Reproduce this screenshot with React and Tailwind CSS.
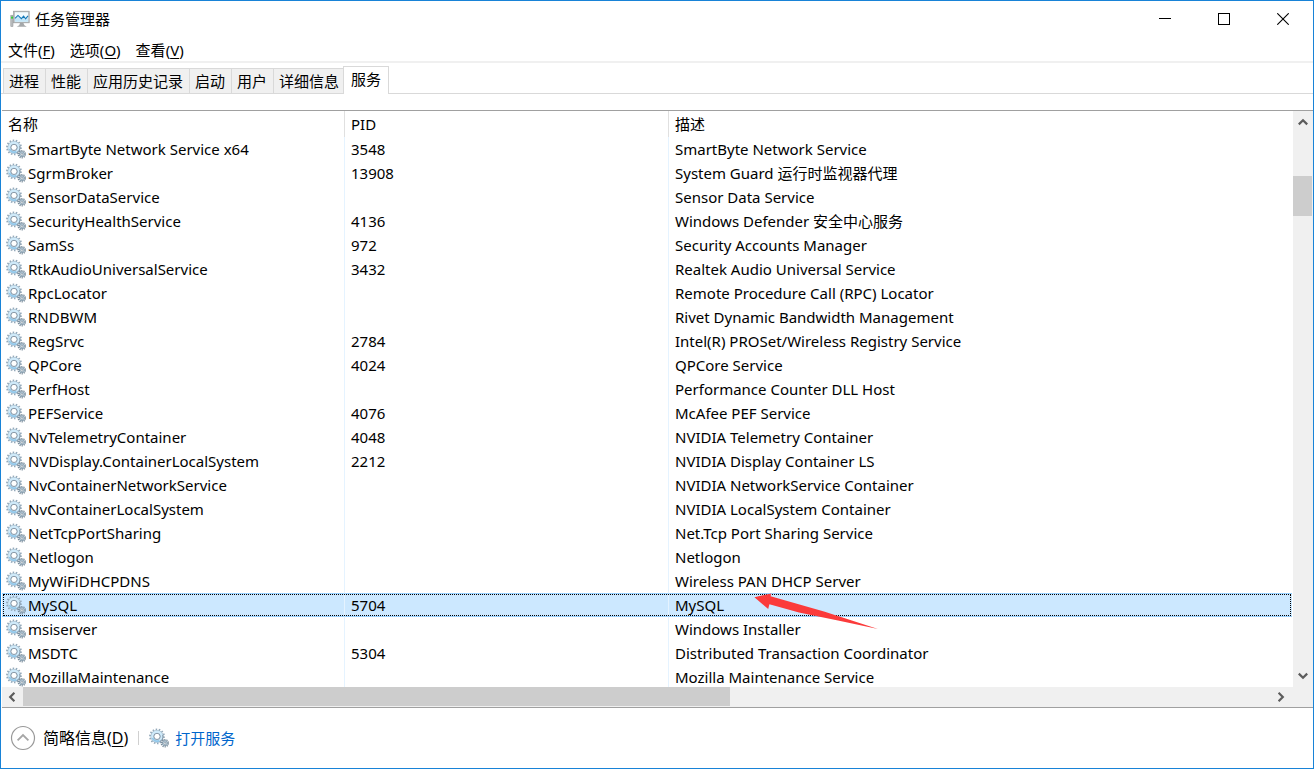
const menus = [
  { label: "文件", hotkey: "F" },
  { label: "选项", hotkey: "O" },
  { label: "查看", hotkey: "V" },
];

const tabs = ["进程", "性能", "应用历史记录", "启动", "用户", "详细信息", "服务"];
const activeTab = "服务";

const services = [
  { name: "SmartByte Network Service x64", pid: "3548", desc: "SmartByte Network Service" },
  { name: "SgrmBroker", pid: "13908", desc: "System Guard 运行时监视器代理" },
  { name: "SensorDataService", pid: "", desc: "Sensor Data Service" },
  { name: "SecurityHealthService", pid: "4136", desc: "Windows Defender 安全中心服务" },
  { name: "SamSs", pid: "972", desc: "Security Accounts Manager" },
  { name: "RtkAudioUniversalService", pid: "3432", desc: "Realtek Audio Universal Service" },
  { name: "RpcLocator", pid: "", desc: "Remote Procedure Call (RPC) Locator" },
  { name: "RNDBWM", pid: "", desc: "Rivet Dynamic Bandwidth Management" },
  { name: "RegSrvc", pid: "2784", desc: "Intel(R) PROSet/Wireless Registry Service" },
  { name: "QPCore", pid: "4024", desc: "QPCore Service" },
  { name: "PerfHost", pid: "", desc: "Performance Counter DLL Host" },
  { name: "PEFService", pid: "4076", desc: "McAfee PEF Service" },
  { name: "NvTelemetryContainer", pid: "4048", desc: "NVIDIA Telemetry Container" },
  { name: "NVDisplay.ContainerLocalSystem", pid: "2212", desc: "NVIDIA Display Container LS" },
  { name: "NvContainerNetworkService", pid: "", desc: "NVIDIA NetworkService Container" },
  { name: "NvContainerLocalSystem", pid: "", desc: "NVIDIA LocalSystem Container" },
  { name: "NetTcpPortSharing", pid: "", desc: "Net.Tcp Port Sharing Service" },
  { name: "Netlogon", pid: "", desc: "Netlogon" },
  { name: "MyWiFiDHCPDNS", pid: "", desc: "Wireless PAN DHCP Server" },
  { name: "MySQL", pid: "5704", desc: "MySQL", selected: true },
  { name: "msiserver", pid: "", desc: "Windows Installer" },
  { name: "MSDTC", pid: "5304", desc: "Distributed Transaction Coordinator" },
  { name: "MozillaMaintenance", pid: "", desc: "Mozilla Maintenance Service" },
];

const GearIcon = () => (
  <svg className="w-5 h-5 shrink-0" viewBox="0 0 20 20" fill="none" aria-hidden="true">
    {/* big gear */}
    <circle cx="8" cy="8.4" r="6.9" stroke="#94a9ba" strokeWidth="2" strokeDasharray="1.5 1.597" />
    <circle cx="8" cy="8.4" r="4.7" stroke="#a3bacb" strokeWidth="3.4" />
    <circle cx="8" cy="8.4" r="4.7" stroke="#cfeafa" strokeWidth="2.4" />
    <path d="M3.5 10A4.8 4.8 0 0 0 10.4 12.6" stroke="#93c8ea" strokeWidth="1.8" />
    <path d="M10.6 13.6A5.8 5.8 0 0 0 13.8 7" stroke="#76899a" strokeWidth="0.9" />
    <circle cx="8" cy="8.4" r="3.1" fill="#fff" stroke="#7d8f9f" strokeWidth="0.9" />
    {/* small gear */}
    <circle cx="15.9" cy="15.2" r="3.6" stroke="#7b8d9b" strokeWidth="1.3" strokeDasharray="1.26 1.002" />
    <circle cx="15.9" cy="15.2" r="2.6" fill="#cfe4f0" stroke="#8197a8" strokeWidth="1" />
    <circle cx="15.9" cy="15.2" r="1.2" fill="#fff" stroke="#64798a" strokeWidth="0.7" />
  </svg>
);

const AppIcon = () => (
  <svg className="w-5 h-[18px] shrink-0" viewBox="0 0 20 18" aria-hidden="true">
    <rect x="0.8" y="5.2" width="2.2" height="11.4" fill="#b9bcbe" stroke="#8d9092" strokeWidth="0.5" />
    <rect x="1.1" y="6.6" width="2" height="2" fill="#2fd02f" />
    <path d="M10 13h3.4l1 2.2 2.4 1.6H6.8l2.4-1.6z" fill="#a5a8aa" />
    <rect x="3.6" y="1.2" width="15.6" height="11.6" fill="#b4b7b9" stroke="#9a9d9f" strokeWidth="0.7" />
    <rect x="4.8" y="2.2" width="13.4" height="9.6" fill="#f1fafe" />
    <path d="M4.8 9l3-2.4 3 2 2.4-1 2.4 2.6 2.6-3.2v4.8H4.8z" fill="#c3e6f8" />
    <path d="M5 8.4l3-3 3.4 3.2 2.2-2.4 2 2.6 2.4-3" fill="none" stroke="#1378b8" strokeWidth="1.1" />
  </svg>
);

const Chevron = ({ className }) => (
  <svg className={className} width="10" height="8" viewBox="0 0 10 8" fill="none" aria-hidden="true">
    <path d="M0.8 6.4L5 2.2l4.2 4.2" stroke="#5c5c5c" strokeWidth="2.2" />
  </svg>
);

const TitleBar = () => (
  <header className="flex items-center h-[35px] pl-[9px] pr-px">
    <AppIcon />
    <h1 className="ml-[5px] flex-1">任务管理器</h1>
    <button aria-label="最小化" className="w-[59px] h-full flex items-center justify-center">
      <svg width="12" height="12" viewBox="0 0 12 12" shapeRendering="crispEdges">
        <path d="M0 5.5h12" stroke="#000" />
      </svg>
    </button>
    <button aria-label="最大化" className="w-[59px] h-full flex items-center justify-center">
      <svg width="12" height="12" viewBox="0 0 12 12" shapeRendering="crispEdges">
        <rect x="0.5" y="0.5" width="11" height="11" fill="none" stroke="#000" />
      </svg>
    </button>
    <button aria-label="关闭" className="w-[59px] h-full flex items-center justify-center">
      <svg width="12" height="12" viewBox="0 0 12 12">
        <path d="M0.3 0.3l11.4 11.4M11.7 0.3L0.3 11.7" stroke="#000" strokeWidth="1.1" />
      </svg>
    </button>
  </header>
);

const MenuBar = () => (
  <nav className="flex items-center gap-[15px] h-[27px] pt-0.5 pl-[7px] border-b-2 border-[#f0f0f0]">
    {menus.map((menu) => (
      <button key={menu.hotkey}>
        {menu.label}(<span className="underline underline-offset-2">{menu.hotkey}</span>)
      </button>
    ))}
  </nav>
);

const TabStrip = () => (
  <div role="tablist" className="flex items-end h-[31px] pl-0.5 border-b border-[#d9d9d9]">
    {tabs.map((tab) =>
      tab === activeTab ? (
        <button
          key={tab}
          role="tab"
          aria-selected="true"
          className="h-7 -mb-px -ml-0.5 px-[7px] pb-1 bg-white border border-b-0 border-[#d9d9d9]"
        >
          {tab}
        </button>
      ) : (
        <button
          key={tab}
          role="tab"
          aria-selected="false"
          className="h-[25px] pl-[5px] pr-1.5 bg-[#f0f0f0] border-t border-l border-[#d9d9d9]"
        >
          {tab}
        </button>
      )
    )}
  </div>
);

const Arrow = () => (
  <svg
    className="absolute left-[85px] -top-px z-10 pointer-events-none"
    width="126"
    height="38"
    viewBox="0 0 126 38"
    aria-hidden="true"
  >
    <path d="M0.4 4.3L17.4 0.4L16.6 3.2L70 18.5L124 36L84 27.6L45 19.5L15.4 11.2L14.2 16z" fill="#fb3b3b" />
  </svg>
);

const ServiceRow = ({ service }) => {
  const cell = service.selected
    ? "h-6 p-0 border-y border-y-[#99d1ff]"
    : "h-6 p-0";

  return (
    <tr
      aria-selected={service.selected ? "true" : "false"}
      className={service.selected ? "bg-[#cce8ff] outline-1 outline-dotted outline-black -outline-offset-2" : ""}
    >
      <td className={`${cell} border-r border-r-[#e5f3ff]`}>
        <div className="flex items-center gap-0.5 pl-1 h-[22px]">
          <GearIcon />
          <span>{service.name}</span>
        </div>
      </td>
      <td className={`${cell} border-r border-r-[#e5f3ff]`}>
        <div className="pl-1.5">{service.pid}</div>
      </td>
      <td className={cell}>
        <div className="relative pl-1.5">
          {service.desc}
          {service.selected && <Arrow />}
        </div>
      </td>
    </tr>
  );
};

const ServiceTable = () => (
  <table className="w-full table-fixed border-separate border-spacing-0 leading-[22px] whitespace-nowrap">
    <colgroup>
      <col className="w-[343px]" />
      <col className="w-[324px]" />
      <col />
    </colgroup>
    <thead>
      <tr className="text-left">
        <th className="h-[26px] p-0 pl-1.5 font-normal border-r border-[#e0e0e0]">名称</th>
        <th className="h-[26px] p-0 pl-1.5 font-normal border-r border-[#e0e0e0]">PID</th>
        <th className="h-[26px] p-0 pl-1.5 font-normal">描述</th>
      </tr>
    </thead>
    <tbody>
      {services.map((service) => (
        <ServiceRow key={service.name} service={service} />
      ))}
    </tbody>
  </table>
);

const VerticalScrollbar = () => (
  <div className="flex flex-col w-5 shrink-0 bg-[#f0f0f0]">
    <button aria-label="向上滚动" className="w-[19px] h-[21px] flex items-center justify-center">
      <Chevron />
    </button>
    <div className="flex-1 pt-11">
      <div className="w-[19px] h-10 bg-[#cdcdcd]" />
    </div>
    <button aria-label="向下滚动" className="w-[19px] h-[23px] flex items-center justify-center">
      <Chevron className="rotate-180" />
    </button>
  </div>
);

const HorizontalScrollbar = () => (
  <div className="flex h-5 pr-5 bg-[#f0f0f0]">
    <button aria-label="向左滚动" className="w-[21px] h-[19px] pr-0.5 flex items-center justify-center">
      <Chevron className="-rotate-90" />
    </button>
    <div className="flex-1">
      <div className="w-[57%] h-[19px] bg-[#cdcdcd]" />
    </div>
    <button aria-label="向右滚动" className="w-[30px] h-[19px] pr-[7px] flex items-center justify-end">
      <Chevron className="rotate-90" />
    </button>
  </div>
);

const Footer = () => (
  <footer className="flex items-center h-[60px] pl-[9px]">
    <button className="flex items-center gap-[7px] text-base">
      <svg width="26" height="26" viewBox="0 0 26 26" fill="none" aria-hidden="true">
        <circle cx="13" cy="13" r="11.5" stroke="#999" strokeWidth="1.2" />
        <path d="M7.6 15.4L13 10l5.4 5.4" stroke="#a6a6a6" strokeWidth="1.8" />
      </svg>
      <span>
        简略信息(<span className="underline underline-offset-2">D</span>)
      </span>
    </button>
    <div className="mx-2.5 w-px h-3.5 bg-[#d0d0d0]" />
    <a href="#" className="flex items-center gap-1.5 text-[#0066cc]">
      <GearIcon />
      打开服务
    </a>
  </footer>
);

const App = () => {
  return (
    <div className="flex flex-col h-screen bg-white border border-[#1883d7] text-black text-[15px] leading-5 font-['Noto_Sans','Noto_Sans_CJK_SC',sans-serif]">
      <TitleBar />
      <MenuBar />
      <TabStrip />
      <main className="flex-1 min-h-0 flex flex-col mt-4 ml-px border-y border-[#a0a0a0]">
        <div className="flex-1 min-h-0 flex">
          <div className="flex-1 min-w-0 overflow-hidden pr-px">
            <ServiceTable />
          </div>
          <VerticalScrollbar />
        </div>
        <HorizontalScrollbar />
      </main>
      <Footer />
    </div>
  );
};

export default App;
